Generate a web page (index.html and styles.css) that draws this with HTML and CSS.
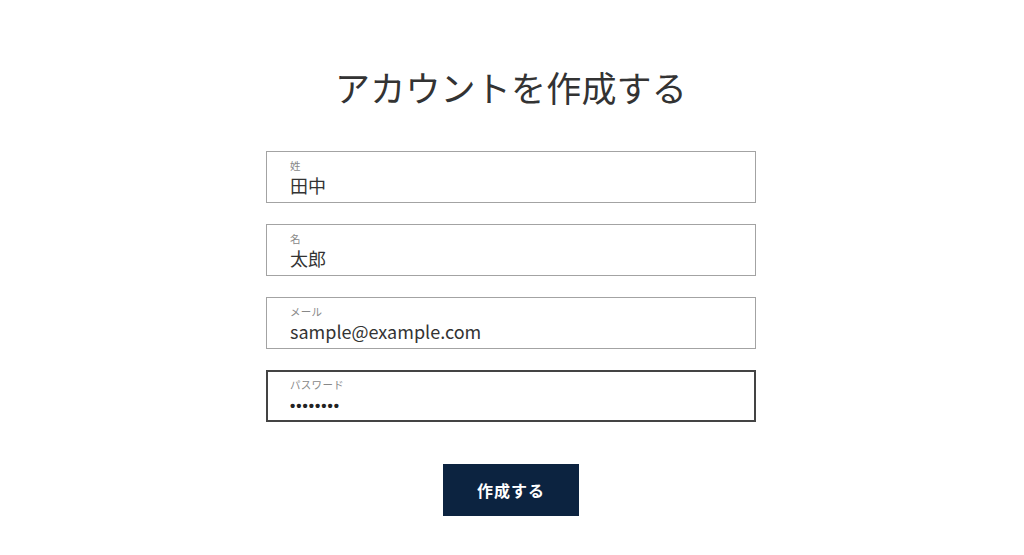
FILE: index.html
```html
<!DOCTYPE html>
<html lang="ja">
<head>
<meta charset="utf-8">
<link rel="stylesheet" href="styles.css">
</head>
<body>
<main class="page">
  <h1 class="title">アカウントを作成する</h1>
  <form class="form">
    <div class="field">
      <span class="label">姓</span>
      <span class="value">田中</span>
    </div>
    <div class="field">
      <span class="label">名</span>
      <span class="value">太郎</span>
    </div>
    <div class="field">
      <span class="label">メール</span>
      <span class="value">sample@example.com</span>
    </div>
    <div class="field field-focus">
      <span class="label">パスワード</span>
      <span class="value dots">••••••••</span>
    </div>
    <div class="actions">
      <button type="button" class="btn">作成する</button>
    </div>
  </form>
</main>
</body>
</html>
```
FILE: styles.css
```css
* { box-sizing: border-box; }
html, body { margin: 0; padding: 0; background: #fff; }
body {
  font-family: "Noto Sans CJK JP", "Noto Sans", sans-serif;
  color: #333;
  width: 1022px;
  height: 555px;
  overflow: hidden;
}
.page {
  display: flex;
  flex-direction: column;
  align-items: center;
  padding-top: 61px;
}
.title {
  margin: 0;
  font-size: 35px;
  font-weight: 400;
  line-height: 52px;
  color: #333;
  letter-spacing: 0.2px;
}
.form {
  margin-top: 38px;
  width: 490px;
  display: flex;
  flex-direction: column;
  gap: 21px;
}
.field {
  height: 52px;
  border: 1px solid #a3a3a3;
  padding: 7px 23px 0;
  display: flex;
  flex-direction: column;
}
.field-focus {
  border: 2px solid #444;
  padding: 6px 22px 0;
}
.label {
  font-size: 10.5px;
  line-height: 14px;
  color: #888;
  letter-spacing: 0.3px;
}
.value {
  font-size: 18px;
  line-height: 24px;
  color: #333;
}
.dots {
  font-family: "Liberation Sans", sans-serif;
  font-size: 15px;
  letter-spacing: 1px;
  font-weight: 700;
  line-height: 24px;
  padding-top: 2px;
  color: #222;
}
.actions {
  display: flex;
  justify-content: center;
  margin-top: 21px;
}
.btn {
  width: 136px;
  height: 52px;
  border: none;
  background: #0c2340;
  color: #fff;
  font-family: "Noto Sans CJK JP", "Noto Sans", sans-serif;
  font-size: 16px;
  font-weight: 700;
  letter-spacing: 1px;
  cursor: pointer;
}
```
